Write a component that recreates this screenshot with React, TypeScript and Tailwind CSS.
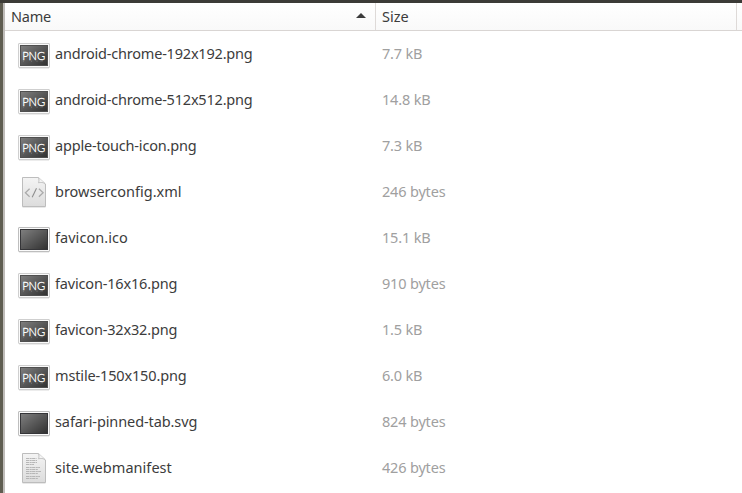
type Kind = 'png' | 'image' | 'xml' | 'text';

const files: { name: string; size: string; kind: Kind; track: string }[] = [
  { name: 'android-chrome-192x192.png', size: '7.7 kB', kind: 'png', track: 'tracking-[-0.2px]' },
  { name: 'android-chrome-512x512.png', size: '14.8 kB', kind: 'png', track: 'tracking-[-0.2px]' },
  { name: 'apple-touch-icon.png', size: '7.3 kB', kind: 'png', track: 'tracking-[-0.19px]' },
  { name: 'browserconfig.xml', size: '246 bytes', kind: 'xml', track: 'tracking-[0px]' },
  { name: 'favicon.ico', size: '15.1 kB', kind: 'image', track: 'tracking-[0.04px]' },
  { name: 'favicon-16x16.png', size: '910 bytes', kind: 'png', track: 'tracking-[-0.17px]' },
  { name: 'favicon-32x32.png', size: '1.5 kB', kind: 'png', track: 'tracking-[-0.17px]' },
  { name: 'mstile-150x150.png', size: '6.0 kB', kind: 'png', track: 'tracking-[-0.15px]' },
  { name: 'safari-pinned-tab.svg', size: '824 bytes', kind: 'image', track: 'tracking-[-0.1px]' },
  { name: 'site.webmanifest', size: '426 bytes', kind: 'text', track: 'tracking-[0.04px]' },
];

function Gradients() {
  return (
    <svg width="0" height="0" className="absolute" aria-hidden="true">
      <defs>
        <linearGradient id="screen" x1="0" y1="0" x2="1" y2="1">
          <stop offset="0" stopColor="#808080" />
          <stop offset="1" stopColor="#303030" />
        </linearGradient>
        <linearGradient id="paper" x1="0" y1="0" x2="0" y2="1">
          <stop offset="0" stopColor="#f4f4f4" />
          <stop offset="1" stopColor="#dcdcdc" />
        </linearGradient>
      </defs>
    </svg>
  );
}

function ImageIcon({ label }: { label: boolean }) {
  return (
    <svg width="32" height="32" viewBox="0 0 32 32" className="shrink-0">
      <rect x="1" y="30" width="30" height="1" fill="#ececec" />
      <rect x="0.5" y="5.5" width="31" height="24" rx="0.5" fill="#fafafa" stroke={label ? '#cfcfcf' : '#bebebe'} />
      <rect x="2.5" y="7.5" width="27" height="20" fill="url(#screen)" stroke={label ? '#505050' : '#353538'} />
      {label && (
        <>
          <text
            x="4.2"
            y="21.5"
            textLength="23"
            lengthAdjust="spacingAndGlyphs"
            fill="#fff"
            stroke="#fff"
            strokeWidth="0.3"
            className="font-['Lato',sans-serif] text-[12px] font-light tracking-normal"
          >
            PNG
          </text>
          <path d="M5.5 22.5v1.5M13.5 22.5v1.5M19 22.5v1.5M22 22.9h3" fill="none" stroke="#777" strokeWidth="0.7" />
        </>
      )}
    </svg>
  );
}

function PageIcon({ code }: { code: boolean }) {
  return (
    <svg width="32" height="32" viewBox="0 0 32 32" className="shrink-0">
      <path d="M4.5 31.2h23" stroke="#dedede" strokeWidth="1" />
      <path d="M4.5 1.5h16l7 6.5v22.5h-23z" fill="url(#paper)" stroke="#bdbdbd" />
      <path d="M19.5 1.8c1.8 1.2 1.2 3.5.8 5.2 2-.6 5-.8 6.7 1.5V7.5L21 1.8z" fill="#d0d0d0" />
      <path d="M20.5 1.8c1 1.5.5 3.7 0 5 2-.6 5-.6 6.7 1" fill="#f5f5f5" stroke="#bcbcbc" strokeWidth="0.8" />
      {code ? (
        <g fill="none" stroke="#8e8e8e" strokeWidth="1.1">
          <path d="M11.6 12.8 7.4 16.7l4.2 4M20.9 12.8l4.2 3.9-4.2 4" stroke="#aaaaaa" strokeWidth="1.25" />
          <path d="m18.5 12.3-4.3 8.9" />
        </g>
      ) : (
        <path
          d="M8 6.5h10.5M8 8.5h11M8 10.5h11M8 12.5h8M8 15.5h14M8 17.5h12M8 19.5h15M8 21.5h12M8 24.5h14M8 26.5h12"
          fill="none"
          stroke="#b0b0b0"
          strokeWidth="0.9"
          strokeDasharray="3.2 0.5 2 0.4"
        />
      )}
    </svg>
  );
}

export default function App() {
  return (
    <div className="flex h-[493px] w-[742px] flex-col overflow-hidden bg-white font-['Noto_Sans',sans-serif] text-[14.5px] text-[#3c3c3c]">
      <Gradients />
      <div className="h-[3px] shrink-0 bg-[#3c3b37]" />
      <div className="flex min-h-0 flex-1">
        <div className="w-[3px] shrink-0 bg-[#5f5d51]" />
        <div className="w-[2px] shrink-0 bg-[#bfbcb9]" />
        <div className="min-w-0 flex-1">
          <div className="flex h-7 border-b border-[#d9d5d3] bg-linear-to-b from-white to-[#f9f9f9] leading-[27px]">
            <div className="flex w-[371px] items-center justify-between border-r border-[#dedad8] pr-[9px] pl-[6px]">
              <span className="tracking-[-0.25px]">Name</span>
              <svg width="10" height="5" viewBox="0 0 10 5" className="mb-[2px]">
                <path d="M0 5 5 0l5 5z" fill="#3c3c3c" />
              </svg>
            </div>
            <div className="w-[361px] border-r border-[#dedad8] pl-[6px]">Size</div>
          </div>
          {files.map((f) => (
            <div key={f.name} className="flex h-[46px] items-center leading-[20px]">
              <div className="flex w-[377px] items-center gap-[5px] pl-[13px]">
                {f.kind === 'png' || f.kind === 'image' ? (
                  <ImageIcon label={f.kind === 'png'} />
                ) : (
                  <PageIcon code={f.kind === 'xml'} />
                )}
                <span className={`pb-[2px] ${f.track}`}>{f.name}</span>
              </div>
              <span className="pb-[2px] tracking-[-0.18px] text-[#a0a0a0]">{f.size}</span>
            </div>
          ))}
        </div>
      </div>
    </div>
  );
}
